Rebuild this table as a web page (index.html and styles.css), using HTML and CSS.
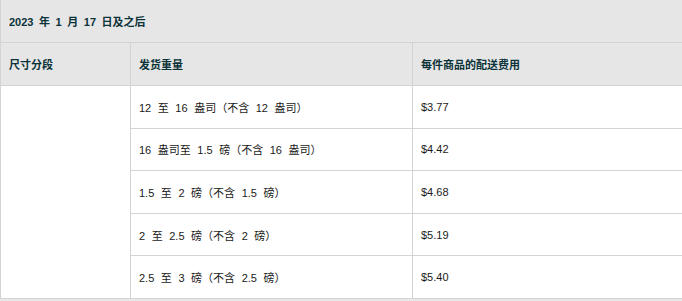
FILE: index.html
```html
<!DOCTYPE html>
<html lang="zh">
<head>
<meta charset="utf-8">
<link rel="stylesheet" href="styles.css">
</head>
<body>
<table class="rates">
  <colgroup>
    <col class="col-size">
    <col class="col-weight">
    <col class="col-fee">
  </colgroup>
  <thead>
    <tr class="title-row"><th colspan="3">2023 年 1 月 17 日及之后</th></tr>
    <tr class="head-row">
      <th>尺寸分段</th>
      <th>发货重量</th>
      <th>每件商品的配送费用</th>
    </tr>
  </thead>
  <tbody>
    <tr><td rowspan="5"></td><td>12 至 16 盎司（不含 12 盎司）</td><td>$3.77</td></tr>
    <tr><td>16 盎司至 1.5 磅（不含 16 盎司）</td><td>$4.42</td></tr>
    <tr><td>1.5 至 2 磅（不含 1.5 磅）</td><td>$4.68</td></tr>
    <tr><td>2 至 2.5 磅（不含 2 磅）</td><td>$5.19</td></tr>
    <tr><td>2.5 至 3 磅（不含 2.5 磅）</td><td>$5.40</td></tr>
  </tbody>
</table>
</body>
</html>
```
FILE: styles.css
```css
html { background: #e8e8e8; }
body {
  margin: 0;
  font-family: "Liberation Sans", Arial, "Noto Sans CJK SC", sans-serif;
  font-size: 11px;
  color: #1a1a1a;
}
.rates {
  width: 682px;
  border-collapse: collapse;
  background: #fff;
  table-layout: fixed;
}
.col-size { width: 130px; }
.col-weight { width: 282px; }
.col-fee { width: 270px; }
.rates th, .rates td {
  border: 1px solid #d3d3d3;
  text-align: left;
  vertical-align: middle;
  padding: 0 8px;
}
.rates tr:first-child th { border-top: none; }
.rates th {
  background: #e6e6e6;
  color: #0b3339;
  font-weight: bold;
  height: 42px;
  word-spacing: 2.5px;
}
.rates td {
  height: 41.6px;
  word-spacing: 3.5px;
}
```
